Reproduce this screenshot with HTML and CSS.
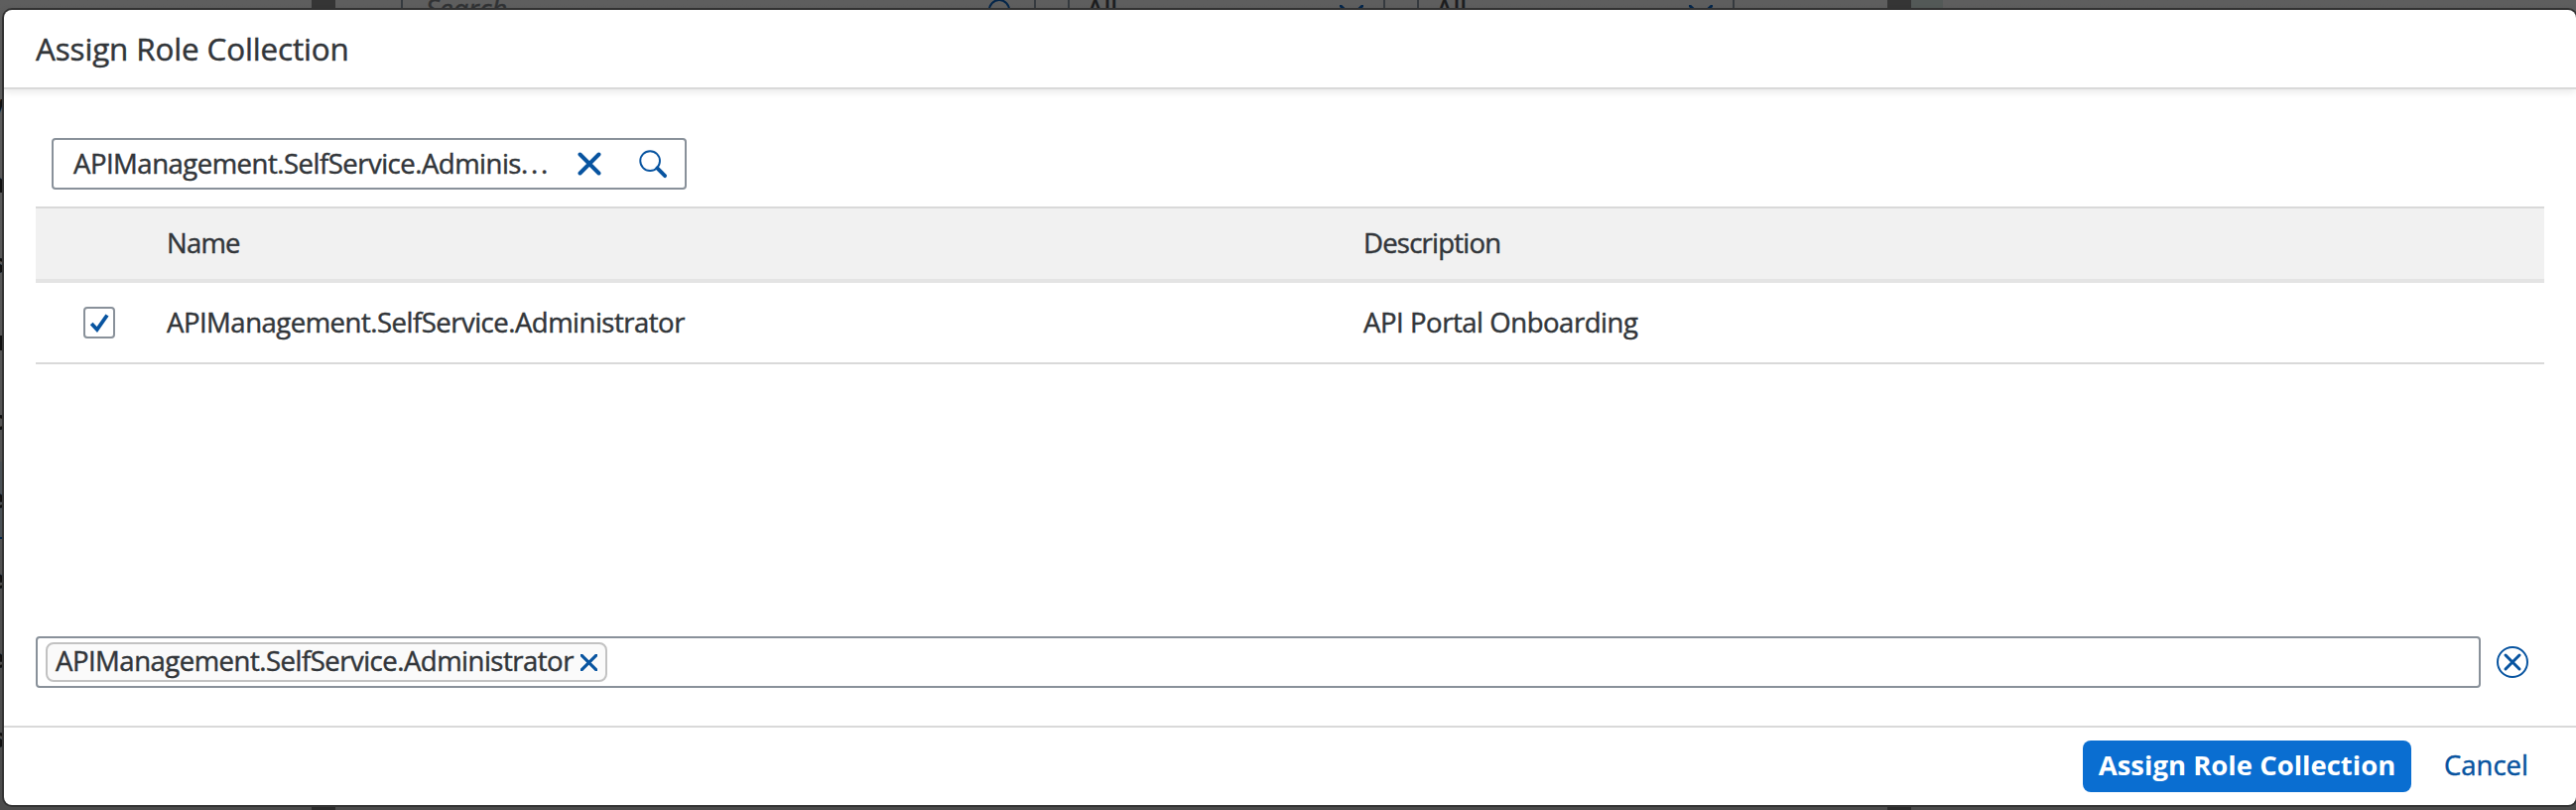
FILE: index.html
```
<!DOCTYPE html>
<html lang="en">
<head>
<meta charset="utf-8">
<title>Assign Role Collection</title>
<link rel="stylesheet" href="styles.css">
</head>
<body>
<div class="page">
  <div class="backdrop" aria-hidden="true">
    <span class="bar bar-left"></span>
    <span class="field field-search"><i>Search</i><svg class="lens" viewBox="0 0 32 32"><circle cx="13" cy="13" r="10"/></svg></span>
    <span class="field field-a">All<svg class="chev" viewBox="0 0 24 12"><path d="M1 1l11 10L23 1"/></svg></span>
    <span class="field field-b">All<svg class="chev" viewBox="0 0 24 12"><path d="M1 1l11 10L23 1"/></svg></span>
    <span class="bar bar-right"></span>
    <span class="bar bar-tint"></span>
    <span class="bar bar-foot bar-foot-left"></span>
    <span class="bar bar-foot bar-foot-right"></span>
    <span class="rail"><span class="rail-active"></span>
      <b class="r1">v</b><b class="r2">n</b><b class="r3">s</b><b class="r4">u</b><b class="r5">c</b><b class="r6">e</b><b class="r7">e</b><b class="r8">e</b><b class="r9">s</b>
    </span>
  </div>
  <div class="dialog" role="dialog">
    <header class="head"><h1 class="title">Assign Role Collection</h1></header>
    <main class="body">
      <div class="search">
        <span class="search-text">APIManagement.SelfService.Adminis<span class="dots">...</span></span>
        <svg class="clear" viewBox="0 0 24 24"><path d="M2.5 2.5l19 19M21.5 2.5l-19 19"/></svg>
        <svg class="find" viewBox="0 0 30 30"><circle cx="11.5" cy="11.5" r="10.2"/><path class="handle" d="M19 19l8 8"/></svg>
      </div>
      <div class="table">
        <div class="row row-head"><span></span><span class="t-head">Name</span><span class="t-head">Description</span></div>
        <div class="row row-item">
          <span class="check"><svg viewBox="0 0 20 20"><path d="M2.2 11l5.6 6L18 2.5"/></svg></span>
          <span class="t-role">APIManagement.SelfService.Administrator</span>
          <span class="t-api">API Portal Onboarding</span>
        </div>
      </div>
      <div class="selection">
        <div class="tokens">
          <span class="token"><span class="t-role">APIManagement.SelfService.Administrator</span><svg class="remove" viewBox="0 0 16 16"><path d="M1 1l14 14M15 1L1 15"/></svg></span>
        </div>
        <svg class="reset" viewBox="0 0 32 32"><circle cx="16" cy="16" r="15"/><path d="M9 9l14 14M23 9L9 23"/></svg>
      </div>
    </main>
    <footer class="foot">
      <button class="primary">Assign Role Collection</button>
      <button class="cancel">Cancel</button>
    </footer>
  </div>
</div>
</body>
</html>
```
FILE: styles.css
```
* { box-sizing: border-box; }
body { margin: 0; font-family: "Open Sans", "Noto Sans", sans-serif; font-size: 27.5px; line-height: 38px; color: #32363a; }
.page { position: relative; width: 2596px; height: 816px; overflow: hidden; background: linear-gradient(#5e5e5e, #4b4b4b); }
svg { fill: none; stroke: #0854a0; stroke-width: 3; stroke-linecap: round; flex: none; display: block; }

/* Dimmed page behind the dialog */
.backdrop { position: absolute; inset: 0; color: #1b1c1d; }
.bar { position: absolute; top: 0; height: 10px; background: #353535; }
.bar-left { left: 314px; width: 24px; }
.bar-right { left: 1902px; width: 24px; }
.bar-tint { left: 1926px; width: 32px; background: #535957; }
.bar-foot { top: 811px; background: #2b2b2b; }
.bar-foot-left { left: 314px; width: 24px; }
.bar-foot-right { left: 1902px; width: 24px; }
.field { position: absolute; top: -17px; height: 52px; padding: 7px 20px 7px 17px; border: 2px solid #353a3f; display: flex; justify-content: space-between; align-items: center; line-height: 34px; -webkit-text-stroke: .5px; }
.field-search { left: 404px; width: 640px; padding: 7px 16px 7px 23px; color: #303234; }
.field-a { left: 1076px; width: 320px; }
.field-b { left: 1428px; width: 320px; }
.lens { width: 32px; height: 32px; stroke: #04264a; stroke-width: 2; margin-top: 8px; }
.chev { width: 24px; height: 12px; stroke: #04264a; margin-top: 4px; }
.rail { position: absolute; left: 0; top: 0; width: 5px; height: 816px; overflow: hidden; }
.rail-active { position: absolute; top: 465px; width: 5px; height: 78px; background: #4a5055; border-bottom: 2px solid #04264a; }
.rail b { position: absolute; right: 0; color: #111; line-height: 38px; }
.r1 { top: 86px; } .r2 { top: 165px; } .r3 { top: 246px; } .r4 { top: 324px; } .r5 { top: 404px; }
.r6 { top: 483px; } .r7 { top: 564px; } .r8 { top: 644px; } .r9 { top: 724px; }

.dialog { position: absolute; left: 4px; top: 10px; width: 2592px; height: 801px; background: #fff; border-radius: 8px; box-shadow: 0 0 0 2px #333; display: flex; flex-direction: column; -webkit-text-stroke: .45px; }
.head { height: 80px; padding: 16px 32px; border-bottom: 2px solid #d9d9d9; box-shadow: 0 2px 8px rgba(0,0,0,.1); }
.title { margin: 0; font-size: 31.4px; line-height: 46px; font-weight: 400; white-space: nowrap; letter-spacing: -.13px; }
.body { flex: 1; display: flex; flex-direction: column; padding: 49px 32px 38px; }
.search { width: 640px; height: 52px; margin-left: 16px; padding: 0 17px 0 20px; border: 2px solid #89919a; border-radius: 4px; display: flex; align-items: center; }
.search-text { flex: 1; white-space: nowrap; letter-spacing: -.5px; padding-bottom: 1px; }
.dots { letter-spacing: 2.8px; }
.clear { width: 24px; height: 24px; margin-right: 38px; stroke-width: 4; }
.find { width: 29px; height: 29px; stroke-width: 2; }
.handle { stroke-width: 4; }
.table { margin-top: 17px; }
.row { display: grid; grid-template-columns: 132px 1206px 1fr; align-items: center; white-space: nowrap; }
.row-head { height: 77px; background: #f1f1f1; border-top: 2px solid #d9d9d9; border-bottom: 4px solid #e4e4e4; }
.row-item { height: 82px; border-bottom: 2px solid #d9d9d9; }
.t-head { letter-spacing: -.78px; padding-bottom: 2px; }
.t-role { letter-spacing: -.5px; }
.t-api { letter-spacing: -.45px; }
.check { width: 32px; height: 32px; margin-left: 48px; border: 2px solid #89919a; border-radius: 4px; display: grid; place-items: center; }
.check svg { width: 20px; height: 20px; stroke-width: 3.8; stroke-linecap: butt; }
.selection { margin-top: auto; display: flex; align-items: center; gap: 16px; }
.tokens { width: 2464px; height: 52px; padding: 4px 8px; border: 2px solid #89919a; border-radius: 4px; display: flex; align-items: center; }
.token { width: 566px; height: 40px; padding: 0 8px; background: #fafafa; border: 2px solid #c2c2c2; border-radius: 8px; display: flex; align-items: center; justify-content: space-between; white-space: nowrap; }
.token .t-role { padding-bottom: 2px; }
.remove { width: 17px; height: 17px; stroke-width: 2.9; }
.reset { width: 32px; height: 32px; stroke-width: 2; }
.reset path { stroke-width: 3; }
.foot { height: 80px; border-top: 2px solid #d9d9d9; padding: 13px 32px 0 0; display: flex; justify-content: flex-end; align-items: flex-start; }
button { font: inherit; border: 0; padding: 0 0 2px; height: 52px; white-space: nowrap; border-radius: 8px; }
.primary { width: 331px; background: #0a6ed1; color: #fff; font-weight: 700; -webkit-text-stroke: 0; }
.cancel { width: 118px; background: none; color: #0854a0; text-align: right; margin-right: 16px; }
```
